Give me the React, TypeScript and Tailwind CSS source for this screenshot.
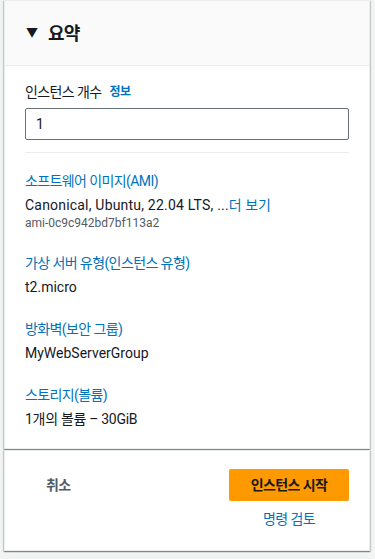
import React from 'react';

const font = { fontFamily: 'Roboto, "Noto Sans CJK KR", sans-serif' };

const Field: React.FC<{ label: string; first?: boolean; children: React.ReactNode }> = ({ label, first, children }) => (
  <div className={first ? 'mt-[18px]' : 'mt-[22px]'}>
    <div className="text-[14px] leading-[20px] tracking-[-0.6px] text-[#0073bb]">{label}</div>
    <div className="mt-[4px]">{children}</div>
  </div>
);

const App: React.FC = () => {
  return (
    <div className="min-h-[559px] bg-[#f2f3f3] pl-[4px] pr-[5px] text-[#16191f]" style={font}>
      {/* Summary card */}
      <div className="bg-white border border-[#eaeded] shadow-[0_1px_1px_0_rgba(0,28,36,0.3),1px_1px_1px_0_rgba(0,28,36,0.15),-1px_1px_1px_0_rgba(0,28,36,0.15)]">
        <div className="h-[65px] flex items-center px-[21px] bg-[#fafafa] border-b border-[#eaeded]">
          <span className="text-[12px] mr-[10px]">▼</span>
          <span className="text-[18px] font-bold tracking-[-0.8px]">요약</span>
        </div>
        <div className="px-[20px] pt-[16px] pb-[19px]">
          <div className="flex items-center gap-[8px] text-[14px] leading-[20px] tracking-[-0.6px]">
            <span>인스턴스 개수</span>
            <span className="text-[12px] font-bold text-[#0073bb]">정보</span>
          </div>
          <div className="mt-[6px] h-[32px] border border-[#687078] rounded-[2px] flex items-center px-[10px] text-[14px]">
            1
          </div>
          <div className="mt-[12px] border-t border-[#eaeded]" />

          <Field label="소프트웨어 이미지(AMI)" first>
            <div className="text-[14px] leading-[20px]">
              <span className="tracking-[0.2px]">Canonical, Ubuntu, 22.04 LTS, ...</span>
              <span className="text-[#0073bb]">더 보기</span>
            </div>
            <div className="text-[12px] leading-[16px] text-[#545b64]">ami-0c9c942bd7bf113a2</div>
          </Field>

          <Field label="가상 서버 유형(인스턴스 유형)">
            <div className="text-[14px] leading-[20px]">t2.micro</div>
          </Field>

          <Field label="방화벽(보안 그룹)">
            <div className="text-[14px] leading-[20px]">MyWebServerGroup</div>
          </Field>

          <Field label="스토리지(볼륨)">
            <div className="text-[14px] leading-[20px] tracking-[-0.3px]">1개의 볼륨 – 30GiB</div>
          </Field>
        </div>
      </div>

      {/* Actions card */}
      <div className="mt-[1px] bg-white border border-[#eaeded] shadow-[0_1px_1px_0_rgba(0,28,36,0.3),1px_1px_1px_0_rgba(0,28,36,0.15),-1px_1px_1px_0_rgba(0,28,36,0.15)] h-[101px] flex justify-between px-[20px] pt-[18px]">
        <button className="h-[32px] px-[21px] text-[14px] font-bold tracking-[-0.6px] text-[#545b64]">취소</button>
        <div className="flex flex-col items-center">
          <button className="h-[32px] w-[120px] rounded-[2px] bg-[#ff9900] text-[14px] font-bold tracking-[-0.6px] text-[#16191f]">
            인스턴스 시작
          </button>
          <span className="mt-[8px] text-[14px] tracking-[-0.6px] text-[#0073bb]">명령 검토</span>
        </div>
      </div>
    </div>
  );
};

export default App;
